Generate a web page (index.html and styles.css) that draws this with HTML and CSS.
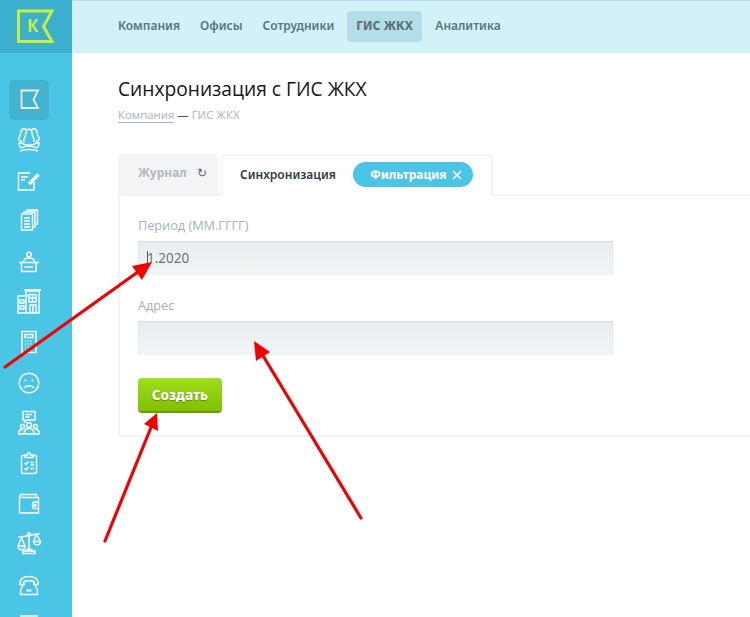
FILE: index.html
```html
<!DOCTYPE html>
<html lang="ru">
<head>
<meta charset="utf-8">
<title>Синхронизация с ГИС ЖКХ</title>
<link rel="stylesheet" href="styles.css">
</head>
<body>
<div class="app">
  <aside class="sidebar">
    <div class="logo">
      <svg class="logo-svg" width="38" height="36" viewBox="0 0 38 36">
        <path class="logo-flag" d="M1.5 2H35L26.500 17.500L35 32.500H1.500Z"/>
        <text class="logo-k" x="10" y="23">К</text>
      </svg>
    </div>
    <nav class="side-menu">
      <a class="side-item side-item-active"><svg class="ico ico-cream" viewBox="0 0 40 40"><path d="M12.500 10.500H29L24.500 19.500L29 28H12.500Z"/></svg></a>
      <a class="side-item"><svg class="ico" viewBox="0 0 40 40"><path d="M13 21C9 21 9 18 11 16C12 14 11 10 14 9C16.500 8.300 17.500 9.500 18 11M27 21C31 21 31 18 29 16C28 14 29 10 26 9C23.500 8.300 22.500 9.500 22 11"/><path d="M15 22C14 18 17 17 17 13C17 8 23 8 23 13C23 17 26 18 25 22"/><path d="M10 23H13C16 26 24 26 27 23H30C30 26 29 27 28 28C24 25.500 16 25.500 12 28C11 27 10 26 10 23Z"/><path d="M11 31C16 29 24 29 29 31"/></svg></a>
      <a class="side-item"><svg class="ico" viewBox="0 0 40 40"><path d="M21 12H9.500V29H25V21"/><path d="M12 16H19M12 19H16"/><path class="ico-thick" d="M20 23L29.500 13.500"/></svg></a>
      <a class="side-item"><svg class="ico" viewBox="0 0 40 40"><rect x="12.500" y="13" width="11" height="16"/><path d="M15 13V11H26V26H23.500M18 11V9H28.500V23H26"/><path d="M15 17H21M15 20H21M15 23H21M15 26H21"/></svg></a>
      <a class="side-item"><svg class="ico" viewBox="0 0 40 40"><circle cx="20" cy="12.500" r="2.300"/><path d="M14.500 20c0-3 2-4 5.500-4s5.500 1 5.500 4"/><path d="M10 20.500H30M12.500 20.500V29.500H27V20.500"/><path d="M15.500 25H24"/></svg></a>
      <a class="side-item"><svg class="ico" viewBox="0 0 40 40"><path d="M9 31V14H17M9 14H19"/><path d="M17 31V9H30V31M15 8H32"/><path d="M8 31H31"/><path d="M20 12.500H27V20H20ZM23.500 12.500V20M20 16H27"/><path d="M21 31V23H27V31M24 23V31"/><path d="M11 18H15V21H11ZM11 24H15V27H11Z"/></svg></a>
      <a class="side-item"><svg class="ico" viewBox="0 0 40 40"><rect x="13" y="9.500" width="14" height="21"/><rect x="16" y="12.500" width="8" height="3"/><path class="ico-dots" d="M16 19H24M16 22H24M16 25H24M16 28H24"/></svg></a>
      <a class="side-item"><svg class="ico" viewBox="0 0 40 40"><circle cx="20" cy="20" r="9.800"/><path d="M15 25c2-3 8-3 10 0"/><circle class="ico-fill" cx="16.500" cy="17.500" r="1"/><circle class="ico-fill" cx="23.500" cy="17.500" r="1"/></svg></a>
      <a class="side-item"><svg class="ico" viewBox="0 0 40 40"><path d="M14 8.500H26V17H18L15.500 19V17H14Z"/><path d="M16.500 11.500H23M16.500 14H20.500"/><circle cx="20" cy="22" r="2.500"/><circle cx="13.500" cy="23.500" r="2"/><circle cx="26.500" cy="23.500" r="2"/><path d="M15 31c0-4 2-5.500 5-5.500s5 1.500 5 5.500ZM9.500 31c0-3 1.500-4.500 4-4.500M30.500 31c0-3-1.500-4.500-4-4.500M9.500 31H30.500"/></svg></a>
      <a class="side-item"><svg class="ico" viewBox="0 0 40 40"><path d="M16 11.500H14C13 11.500 12.500 12 12.500 13V28C12.500 29 13 29.500 14 29.500H26C27 29.500 27.500 29 27.500 28V13C27.500 12 27 11.500 26 11.500H24"/><path d="M16 13.500V11H18.500C18.500 8 21.500 8 21.500 11H24V13.500Z"/><path d="M15.500 19L17 20.500L19.500 17.500M15.500 24.500L17 26L19.500 23M21.500 18.500H25M21.500 21H25M21.500 24.500H25"/></svg></a>
      <a class="side-item"><svg class="ico" viewBox="0 0 40 40"><path d="M11 13.500C10.500 12 11 10.500 12.500 10.500H27.500V13.500"/><path d="M10.500 12.500V27.500C10.500 28.500 11 29 12 29H29.500V13.500H12"/><path d="M29.500 18H25C23 18 23 24.500 25 24.500H29.500"/><circle cx="26" cy="21.300" r="1"/></svg></a>
      <a class="side-item"><svg class="ico" viewBox="0 0 40 40"><circle cx="20" cy="10.500" r="1.500"/><path d="M9 13.500L31 9.500M20 12V25M16.500 25.500H23.500M14 29.500V27H26V29.500H14Z"/><path d="M12.500 14L9 22C9 27 16 27 16 22ZM9 22H16M27.500 10.500L24.500 17.500C24.500 22 31.500 22 31.500 17.500ZM24.500 17.500H31.500"/></svg></a>
      <a class="side-item"><svg class="ico" viewBox="0 0 40 40"><path d="M11 19.500C10.500 13 15 11.500 20 11.500S29.500 13 29 19.500H25V16.500C23 15.500 17 15.500 15 16.500V19.500Z"/><path d="M15 18L11.500 25V29.500H28.500V25L25 18"/><path class="ico-thick-sm" d="M17.500 25.500H22.500"/></svg></a>
      <a class="side-item"><svg class="ico" viewBox="0 0 40 40"><path d="M11 11H29"/></svg></a>
    </nav>
  </aside>

  <main class="main">
    <header class="topnav">
      <a class="topnav-link">Компания</a>
      <a class="topnav-link">Офисы</a>
      <a class="topnav-link">Сотрудники</a>
      <a class="topnav-link topnav-link-active">ГИС ЖКХ</a>
      <a class="topnav-link">Аналитика</a>
    </header>

    <section class="content">
      <h1 class="title">Синхронизация с ГИС ЖКХ</h1>
      <div class="crumbs"><a class="crumb-link">Компания</a> <span class="crumb-dash">—</span> <span>ГИС ЖКХ</span></div>

      <div class="tabs">
        <div class="tab tab-muted">Журнал<span class="tab-reload">↻</span></div>
        <div class="tab tab-current">
          <span>Синхронизация</span>
          <span class="pill">Фильтрация
            <svg class="pill-x" width="10" height="10" viewBox="0 0 10 10"><path d="M1 1L9 9M9 1L1 9"/></svg>
          </span>
        </div>
      </div>

      <form class="panel">
        <label class="field-label">Период (ММ.ГГГГ)</label>
        <div class="field-input"><span class="caret"></span>1.2020</div>
        <label class="field-label field-label-next">Адрес</label>
        <div class="field-input"></div>
        <button class="submit" type="button">Создать</button>
      </form>
    </section>
  </main>
</div>

<svg class="arrows" width="750" height="617" viewBox="0 0 750 617">
  <path class="arrow-line" d="M5 367L140 270.500"/>
  <path class="arrow-head" d="M152 262L132 266L142 280Z"/>
  <path class="arrow-line" d="M361 518L262 354"/>
  <path class="arrow-head" d="M254 341L256 361L270 352Z"/>
  <path class="arrow-line" d="M105 541L152 425"/>
  <path class="arrow-head" d="M157 413L144 424L158 431Z"/>
</svg>
</body>
</html>
```

FILE: styles.css
```css
* { box-sizing: border-box; }
html, body { margin: 0; height: 617px; overflow: hidden; background: #fff; }
body { position: relative; font-family: "Noto Sans", "Open Sans", sans-serif; color: #222; }
a { display: block; }

.app { display: flex; width: 750px; height: 617px; overflow: hidden; }

.sidebar { width: 72px; flex: none; background: #4bc5e6; }
.logo { height: 53px; background: #3caece; padding: 9px 0 0 17px; }
.logo-svg { display: block; }
.logo-flag { fill: none; stroke: #c4f03e; stroke-width: 3; }
.logo-k { fill: #c4f03e; font: 700 17px "Open Sans", sans-serif; }

.side-menu { padding: 27px 0 0 9px; display: grid; grid-auto-rows: 40.4px; }
.side-item { width: 40px; height: 40.4px; border-radius: 5px; }
.side-item-active { background: #43b3d2; }
.ico { display: block; width: 40px; height: 40px; fill: none; stroke: #fff; stroke-width: 1.4; }
.ico-cream { stroke: #f2eecb; stroke-width: 1.8; }
.ico-thick { stroke-width: 3.4; }
.ico-thick-sm { stroke-width: 2; }
.ico-dots { stroke-dasharray: 1.4 1.3; stroke-width: 1.2; }
.ico-fill { fill: #fff; stroke: none; }

.main { flex: 1; min-width: 0; }
.topnav { height: 53px; background: #d3f2f8; border-top: 1px solid #bcdde8; padding: 10px 0 0 36px; display: flex; }
.topnav-link { height: 31px; padding: 0 10px; line-height: 30px; font-size: 12px; font-weight: 600; color: #55777f; border-radius: 4px; }
.topnav-link-active { background: #b3dee8; color: #5c7279; font-weight: 800; padding: 0 9px; letter-spacing: .1px; width: 75px; margin: 0 3px; }

.content { padding: 0 0 0 46px; width: 678px; }
.title { margin: 22px 0 0; font: 400 19.2px/28px "Open Sans", sans-serif; color: #15151f; }
.crumbs { margin-top: 3px; font: 400 11.4px/17px "Open Sans", sans-serif; color: #a7b2c9; }
.crumb-link { display: inline; border-bottom: 1px solid #a7b2c9; }
.crumb-dash { color: #555; }

.tabs { display: flex; gap: 3px; margin-top: 31px; height: 40px; }
.tab { height: 40px; font-size: 12px; font-weight: 700; border-radius: 4px 4px 0 0; }
.tab-muted { width: 100px; background: #f2f4f5; color: #b4b9bd; padding: 10px 0 0 20px; }
.tab-reload { margin-left: 10px; color: #667; font-weight: 400; }
.tab-current { width: 272px; border: 2px solid #f1f3f4; border-bottom: 0; padding: 6px 0 0 17px; display: flex; align-items: flex-start; color: #2d3c4a; font-weight: 600; line-height: 25px; position: relative; z-index: 1; background: #fff; margin-bottom: -2px; height: 42px; }
.pill { display: flex; align-items: center; width: 120px; height: 25px; margin-left: 17px; padding-left: 17px; background: #4bc5e6; border-radius: 13px; color: #fff; font-weight: 700; }
.pill-x { margin-left: 5px; fill: none; stroke: #fff; stroke-width: 1.5; }

.panel { width: 660px; height: 243px; border: 2px solid #f1f3f4; border-radius: 4px; padding: 19px 0 0 18px; }
.field-label { display: block; font: 400 12.7px/20px "Open Sans", sans-serif; color: #a5afc0; }
.field-label-next { margin-top: 20px; }
.field-input { width: 475px; height: 34px; margin-top: 6px; background: linear-gradient(#e9edef, #f2f5f6); box-shadow: inset 0 1px 2px rgba(0,0,0,.08); font-size: 13.5px; line-height: 34px; padding-left: 9px; color: #6b7479; }
.caret { display: inline-block; width: 1px; height: 17px; background: #555; vertical-align: middle; margin-right: -1px; }
.submit { display: block; width: 84px; height: 35px; margin-top: 23px; padding: 0; border: 0; border-bottom: 2px solid #6b9f00; border-radius: 4px; background: linear-gradient(#9fdd1e, #80c000); color: #fff; font: 800 13.5px "Noto Sans", sans-serif; text-shadow: 0 1px 1px rgba(60,90,0,.6); }

.arrows { position: absolute; left: 0; top: 0; pointer-events: none; }
.arrow-line { fill: none; stroke: #f30000; stroke-width: 3.2; stroke-linecap: round; }
.arrow-head { fill: #f30000; }
```
